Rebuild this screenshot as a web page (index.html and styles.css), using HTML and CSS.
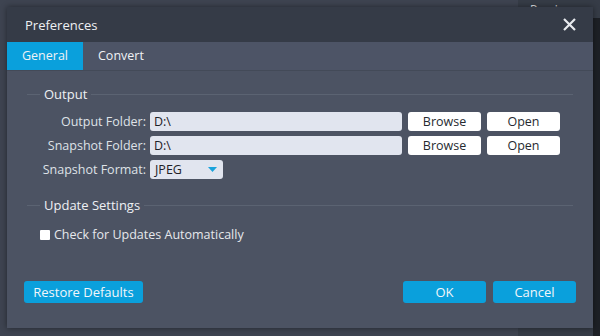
FILE: index.html
```html
<!DOCTYPE html>
<html lang="en">
<head>
    <meta charset="UTF-8">
    <title>Preferences</title>
    <link rel="stylesheet" href="styles.css">
</head>
<body>
    <div class="backdrop-window">
        <span class="backdrop-title">Preview</span>
    </div>
    <div class="backdrop-strip"></div>

    <div class="dialog">
        <div class="titlebar">
            <span class="title">Preferences</span>
            <svg class="close" width="13" height="13" viewBox="0 0 13 13">
                <path d="M1 1 L12 12 M12 1 L1 12" stroke="#e8eaee" stroke-width="2.2" fill="none"/>
            </svg>
        </div>
        <div class="tabs">
            <div class="tab active">General</div>
            <div class="tab">Convert</div>
        </div>

        <div class="content">
            <fieldset class="group">
                <legend>Output</legend>
                <div class="row">
                    <label class="row-label">Output Folder:</label>
                    <div class="field">D:\</div>
                    <button class="btn">Browse</button>
                    <button class="btn">Open</button>
                </div>
                <div class="row">
                    <label class="row-label">Snapshot Folder:</label>
                    <div class="field">D:\</div>
                    <button class="btn">Browse</button>
                    <button class="btn">Open</button>
                </div>
                <div class="row">
                    <label class="row-label">Snapshot Format:</label>
                    <div class="select">
                        <span>JPEG</span>
                        <svg width="9" height="5" viewBox="0 0 9 5"><path d="M0 0 H9 L4.5 5 Z" fill="#1aa3dc"/></svg>
                    </div>
                </div>
            </fieldset>

            <fieldset class="group update">
                <legend>Update Settings</legend>
                <div class="check-row">
                    <span class="checkbox"></span>
                    <span>Check for Updates Automatically</span>
                </div>
            </fieldset>
        </div>

        <div class="footer">
            <button class="btn blue restore">Restore Defaults</button>
            <div class="footer-right">
                <button class="btn blue wide">OK</button>
                <button class="btn blue wide">Cancel</button>
            </div>
        </div>
    </div>
</body>
</html>
```

FILE: styles.css
```css
body {
    margin: 0;
    padding: 7px;
    width: 600px;
    height: 336px;
    box-sizing: border-box;
    background-color: #3e4451;
    font-family: "Open Sans", "Noto Sans", sans-serif;
    font-size: 12.5px;
    color: #e6e8ec;
    overflow: hidden;
    position: relative;
}
.backdrop-window {
    position: absolute;
    left: 518px;
    top: 0;
    width: 82px;
    height: 336px;
    background-color: #363c47;
}
.backdrop-title {
    position: absolute;
    left: 12px;
    top: 1px;
    font-size: 12px;
    color: #e0e2e6;
}
.backdrop-strip {
    position: absolute;
    left: 593px;
    top: 18px;
    width: 7px;
    height: 318px;
    background-color: #1d2026;
}
.dialog {
    position: relative;
    width: 586px;
    height: 321px;
    background-color: #4c5363;
    box-shadow: 0 0 6px rgba(0, 0, 0, 0.45);
    display: flex;
    flex-direction: column;
}
.titlebar {
    height: 35px;
    background-color: #353b47;
    display: flex;
    align-items: center;
    justify-content: space-between;
    padding: 0 17px 0 18px;
}
.title {
    font-size: 13px;
    color: #eef0f3;
}
.tabs {
    height: 28px;
    display: flex;
    background-color: #4d5466;
    border-bottom: 1px solid #434a58;
}
.tab {
    padding: 0 15px;
    line-height: 28px;
    font-size: 12.5px;
    color: #f0f2f5;
}
.tab.active {
    width: 76px;
    box-sizing: border-box;
    text-align: center;
    background-color: #0aa0dc;
}
.content {
    padding: 14px 20px 0 20px;
    flex: 1;
}
.group {
    border: none;
    border-top: 1px solid #5b6372;
    margin: 0;
    padding: 9px 0 0 0;
}
.group legend {
    margin-left: 13px;
    padding: 0 4px;
    font-size: 13px;
    color: #eef0f3;
}
.row {
    display: flex;
    align-items: center;
    height: 19px;
    margin-bottom: 5px;
}
.row-label {
    width: 119px;
    text-align: right;
    padding-right: 4px;
    color: #dfe2e7;
}
.field {
    width: 252px;
    height: 19px;
    line-height: 19px;
    padding-left: 4px;
    box-sizing: border-box;
    background-color: #e1e5ef;
    border-radius: 3px;
    color: #1e2228;
    margin-right: 6px;
}
.btn {
    border: none;
    border-radius: 3px;
    background-color: #ffffff;
    color: #262a30;
    font-family: inherit;
    font-size: 12.5px;
    width: 73px;
    height: 19px;
    padding: 0;
    margin-right: 6px;
}
.select {
    width: 73px;
    height: 19px;
    box-sizing: border-box;
    padding: 0 6px 0 5px;
    background-color: #e1e5ef;
    border-radius: 3px;
    color: #1e2228;
    display: flex;
    align-items: center;
    justify-content: space-between;
}
.update {
    margin-top: 12px;
}
.check-row {
    display: flex;
    align-items: center;
    padding-left: 13px;
    margin-top: 3px;
}
.checkbox {
    width: 10px;
    height: 10px;
    background-color: #ffffff;
    border-radius: 1px;
    margin-right: 4px;
}
.footer {
    display: flex;
    justify-content: space-between;
    padding: 0 17px 25px 17px;
}
.footer-right {
    display: flex;
    gap: 7px;
}
.btn.blue {
    background-color: #0aa0dc;
    color: #f2f6fa;
    font-size: 13px;
    height: 22px;
    margin: 0;
}
.btn.restore {
    width: 119px;
}
.btn.wide {
    width: 83px;
}
```
